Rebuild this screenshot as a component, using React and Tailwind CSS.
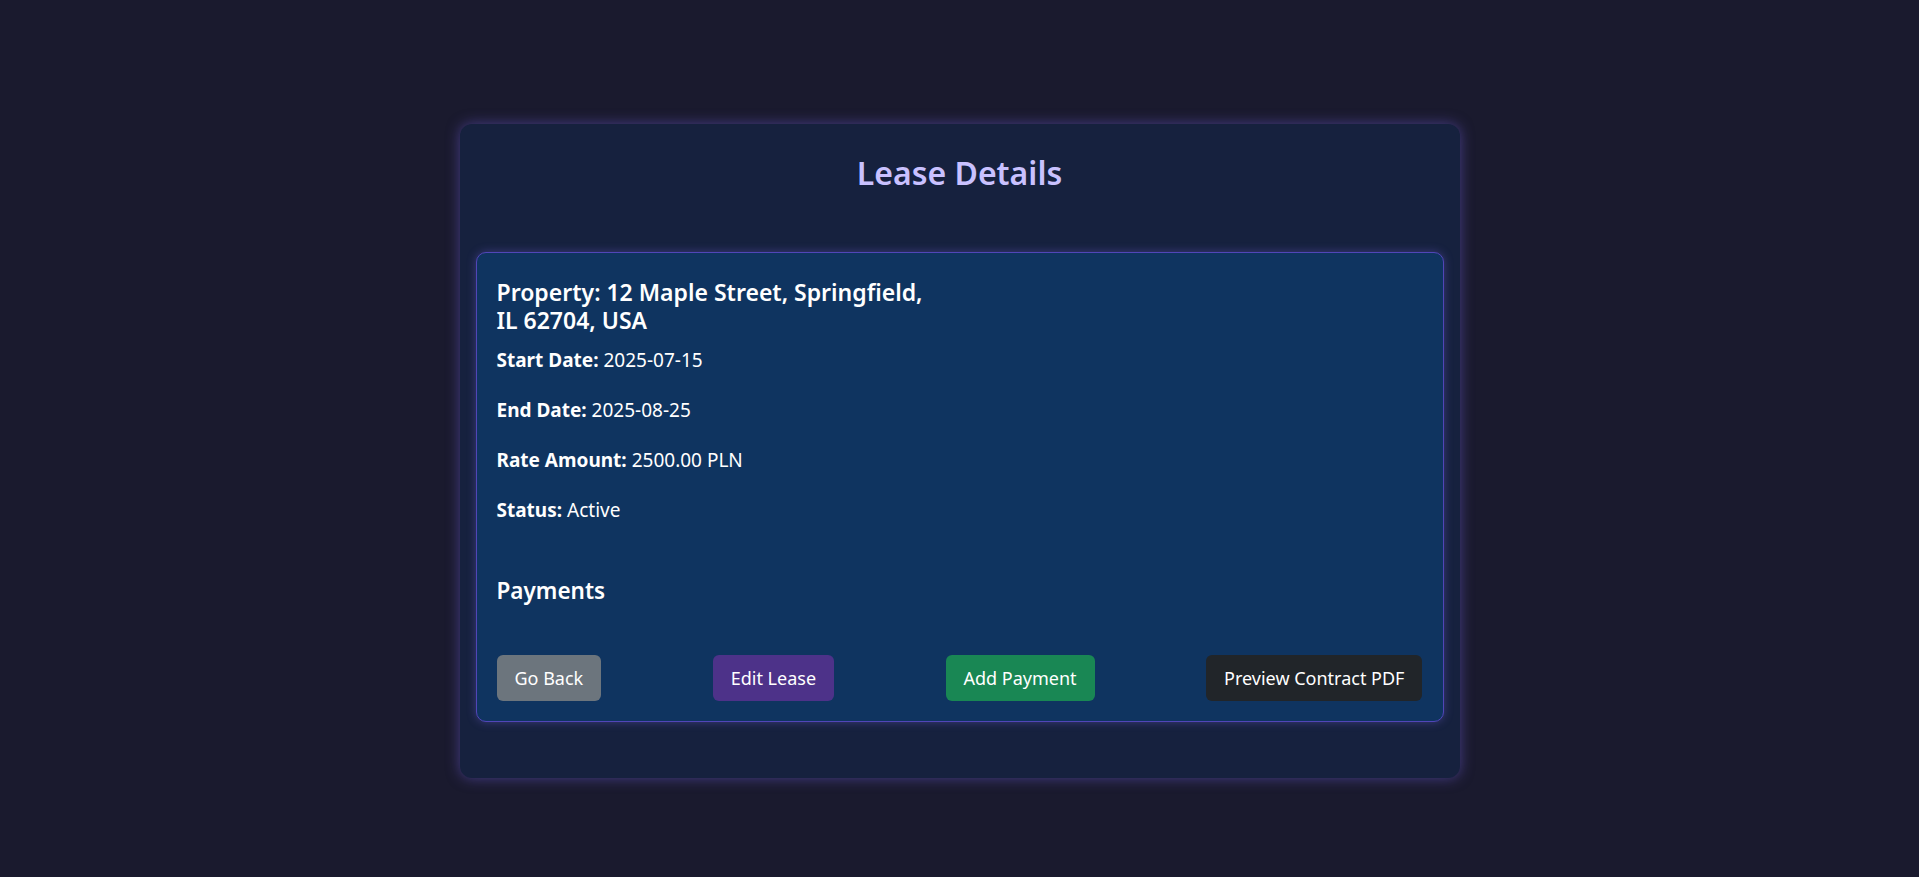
export default function App() {
  const buttons = [
    { label: "Go Back", cls: "bg-[#6c757d]" },
    { label: "Edit Lease", cls: "bg-[#4d3289]" },
    { label: "Add Payment", cls: "bg-[#198754]" },
    { label: "Preview Contract PDF", cls: "bg-[#212529]" },
  ];

  return (
    <div className="min-h-screen bg-[#1a1a2e] pt-[124px] font-['Noto_Sans','Open_Sans',sans-serif] text-white">
      {/* outer card */}
      <div className="mx-auto w-[1000px] rounded-xl bg-[#16213e] px-4 pt-[30px] pb-[56px] shadow-[0_0_14px_rgba(106,90,205,0.55)]">
        <h2 className="mb-[60px] text-center text-[32px] leading-[38px] font-semibold text-[#c9c1ff]">
          Lease Details
        </h2>

        {/* inner card */}
        <div className="rounded-[10px] border border-[#5146b8] bg-[#0f3460] p-5 shadow-[0_0_10px_rgba(106,90,205,0.45)]">
          <h3 className="mt-[5px] max-w-[445px] text-[23px] leading-[28px] font-semibold">
            Property: 12 Maple Street, Springfield, IL 62704, USA
          </h3>

          <div className="mt-[13px] text-[19px] leading-[27px]">
            <p className="mb-[23px]">
              <span className="font-bold">Start Date:</span> 2025-07-15
            </p>
            <p className="mb-[23px]">
              <span className="font-bold">End Date:</span> 2025-08-25
            </p>
            <p className="mb-[23px]">
              <span className="font-bold">Rate Amount:</span> 2500.00 PLN
            </p>
            <p>
              <span className="font-bold">Status:</span> Active
            </p>
          </div>

          <h4 className="mt-[54px] text-[22.5px] leading-[26px] font-semibold">Payments</h4>

          <div className="mt-[51px] flex items-center justify-between">
            {buttons.map((b) => (
              <button
                key={b.label}
                className={`h-[46px] rounded-md px-[18px] text-[18px] text-white ${b.cls}`}
              >
                {b.label}
              </button>
            ))}
          </div>
        </div>
      </div>
    </div>
  );
}
